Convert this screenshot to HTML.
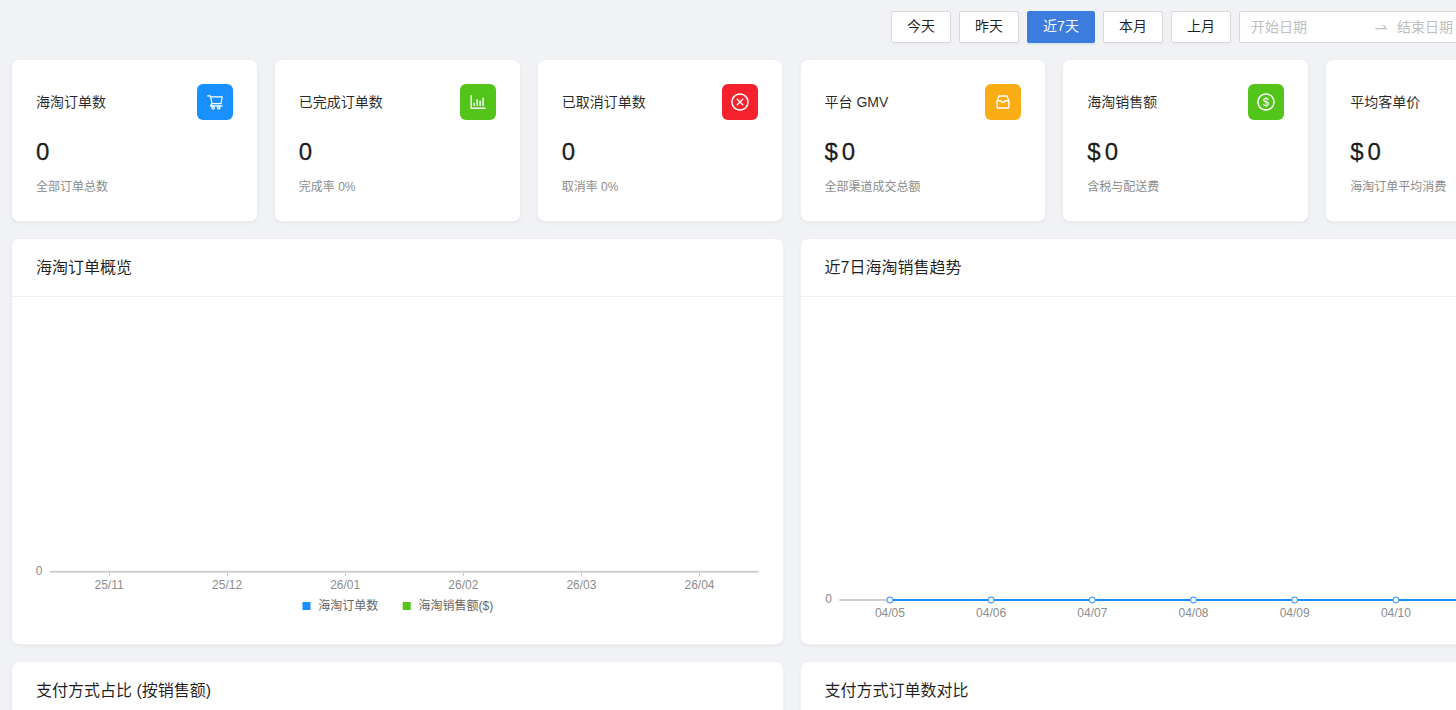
<!DOCTYPE html>
<html lang="zh-CN">
<head>
<meta charset="utf-8">
<title>海淘数据概览</title>
<style>
*{box-sizing:border-box;margin:0;padding:0}
html,body{width:1456px;height:710px;overflow:hidden;background:#f0f2f5}
body{font-family:"Liberation Sans","Noto Sans CJK SC",sans-serif;font-size:14px;color:rgba(0,0,0,.88);position:relative}
#wrap{position:absolute;left:0;top:0;width:1600px;height:900px}
.toolbar{position:absolute;top:11px;left:891px;height:32px;display:flex;gap:8px}
.btn{height:32px;border:1px solid #d9d9d9;background:#fff;border-radius:2px;font-size:14px;line-height:29px;text-align:center;width:60px;color:rgba(0,0,0,.88);box-shadow:0 2px 0 rgba(0,0,0,.02)}
.btn.primary{width:68px;background:#3c7cdc;border-color:#3c7cdc;color:#fff;box-shadow:0 2px 0 rgba(5,145,255,.1)}
.picker{width:300px;height:32px;border:1px solid #d9d9d9;background:#fff;border-radius:2px;display:flex;align-items:center;padding:0 11px 2px;color:#bfbfbf;font-size:14px}
.picker .ph{width:118px}
.picker .arrow{width:16px;margin:0 8px 0 4px;display:flex;align-items:center;position:relative;top:.7px}
.card{position:absolute;background:#fff;border:1px solid #f0f0f0;border-radius:8px;box-shadow:0 1px 2px 0 rgba(0,0,0,.03),0 1px 6px -1px rgba(0,0,0,.02),0 2px 4px 0 rgba(0,0,0,.02)}
.stat{top:59px;width:246.83px;height:163px;padding:24px}
.stat .hd{display:flex;justify-content:space-between;align-items:center;height:36px}
.stat .hd .t{font-size:14px;color:rgba(0,0,0,.85);position:relative;top:-1px}
.ico{width:36px;height:36px;border-radius:6px;display:flex;align-items:center;justify-content:center}
.ico svg{width:20px;height:20px;fill:#fff;display:block}
.stat .v{margin-top:16px;font-size:24px;line-height:32px;height:32px;color:rgba(0,0,0,.88);font-weight:500;-webkit-text-stroke:0.3px rgba(0,0,0,.88)}
.stat .v .pre{margin-right:4px}
.stat .c{margin-top:9px;font-size:12px;line-height:20px;color:#8c8c8c}
.chart{top:238px;width:772.5px;height:407.4px}
.chart .head{height:58px;border-bottom:1px solid #f0f0f0;padding:0 24px;font-size:16px;line-height:58px;color:rgba(0,0,0,.88)}
.bottom{top:661px;width:772.5px;height:200px}
.bottom .head{height:58px;border-bottom:1px solid #f0f0f0;padding:0 24px;font-size:16px;line-height:58px}
svg text{font-family:"Liberation Sans","Noto Sans CJK SC",sans-serif}
</style>
</head>
<body>
<div id="wrap">
<div class="toolbar">
  <div class="btn">今天</div>
  <div class="btn">昨天</div>
  <div class="btn primary">近7天</div>
  <div class="btn">本月</div>
  <div class="btn">上月</div>
  <div class="picker"><span class="ph">开始日期</span><span class="arrow"><svg width="16" height="16" viewBox="0 0 1024 1024" fill="#bfbfbf"><path d="M873.1 596.2l-164-208A32 32 0 00684 376h-64.800c-6.700 0-10.400 7.700-6.300 13l144.300 183H152c-4.400 0-8 3.600-8 8v60c0 4.400 3.600 8 8 8h695.900c26.800 0 41.700-30.800 25.200-51.800z"/></svg></span><span>结束日期</span></div>
</div>

<div class="card stat" style="left:11px">
  <div class="hd"><span class="t">海淘订单数</span><span class="ico" style="background:#1890ff"><svg style="width:18px;height:18px" viewBox="0 0 1024 1024"><path d="M922.9 701.9H327.4l29.9-60.900 496.800-.900c16.800 0 31.200-12 34.200-28.600l68.800-385.100c1.800-10.100-.9-20.500-7.500-28.400a34.990 34.990 0 00-26.600-12.500l-632-2.100-5.400-25.400c-3.400-16.200-18-28-34.600-28H96.500a35.300 35.300 0 100 70.600h125.900L246 312.800l58.100 281.300-74.800 122.100a34.960 34.960 0 00-3 36.800c6 11.900 18.100 19.400 31.500 19.400h62.800a102.430 102.430 0 00-20.600 61.700c0 56.600 46 102.600 102.600 102.600s102.600-46 102.600-102.600c0-22.300-7.400-44-20.600-61.700h161.100a102.430 102.430 0 00-20.600 61.700c0 56.600 46 102.600 102.600 102.600s102.600-46 102.600-102.600c0-22.300-7.400-44-20.600-61.700H923c19.400 0 35.300-15.800 35.300-35.300a35.420 35.420 0 00-35.400-35.200zM305.700 253l575.800 1.900-56.400 315.800-452.300.8L305.700 253zm96.900 612.700c-17.400 0-31.600-14.200-31.600-31.600 0-17.400 14.200-31.600 31.600-31.600s31.600 14.200 31.600 31.600a31.600 31.600 0 01-31.600 31.600zm325.100 0c-17.400 0-31.600-14.200-31.600-31.600 0-17.400 14.200-31.600 31.600-31.600s31.600 14.200 31.600 31.600a31.600 31.600 0 01-31.600 31.600z"/></svg></span></div>
  <div class="v">0</div><div class="c">全部订单总数</div>
</div>
<div class="card stat" style="left:273.83px">
  <div class="hd"><span class="t">已完成订单数</span><span class="ico" style="background:#52c41a"><svg viewBox="0 0 1024 1024"><path d="M888 792H200V168c0-4.400-3.600-8-8-8h-56c-4.400 0-8 3.600-8 8v688c0 4.400 3.600 8 8 8h752c4.400 0 8-3.600 8-8v-56c0-4.400-3.600-8-8-8zm-600-80h56c4.400 0 8-3.600 8-8V560c0-4.400-3.600-8-8-8h-56c-4.400 0-8 3.600-8 8v144c0 4.400 3.600 8 8 8zm152 0h56c4.400 0 8-3.600 8-8V384c0-4.400-3.600-8-8-8h-56c-4.400 0-8 3.600-8 8v320c0 4.400 3.600 8 8 8zm152 0h56c4.400 0 8-3.600 8-8V462c0-4.400-3.600-8-8-8h-56c-4.400 0-8 3.600-8 8v242c0 4.400 3.600 8 8 8zm152 0h56c4.400 0 8-3.600 8-8V304c0-4.400-3.600-8-8-8h-56c-4.400 0-8 3.600-8 8v400c0 4.400 3.600 8 8 8z"/></svg></span></div>
  <div class="v">0</div><div class="c">完成率 0%</div>
</div>
<div class="card stat" style="left:536.67px">
  <div class="hd"><span class="t">已取消订单数</span><span class="ico" style="background:#f5222d"><svg viewBox="0 0 1024 1024"><path d="M348 348L676 676M676 348L348 676" stroke="#fff" stroke-width="70" fill="none"/><path d="M512 65C264.600 65 64 265.600 64 513s200.600 448 448 448 448-200.600 448-448S759.400 65 512 65zm0 820c-205.400 0-372-166.600-372-372s166.600-372 372-372 372 166.600 372 372-166.600 372-372 372z"/></svg></span></div>
  <div class="v">0</div><div class="c">取消率 0%</div>
</div>
<div class="card stat" style="left:799.5px">
  <div class="hd"><span class="t">平台 GMV</span><span class="ico" style="background:#faad14"><svg style="width:18px;height:18px" viewBox="0 0 1024 1024"><path d="M885.200 446.300l-.2-.8-112.200-285.100c-5-16.100-19.900-27.200-36.800-27.200H281.200c-17 0-32.100 11.300-36.900 27.600L139.400 443l-.3.700-.2.800c-1.300 4.900-1.700 9.900-1 14.800-.1 1.600-.2 3.200-.2 4.800V830a60.900 60.900 0 0060.800 60.800h627.200c33.500 0 60.800-27.300 60.900-60.800V464.100c0-1.300 0-2.600-.1-3.700.4-4.900 0-9.600-1.300-14.100zm-295.800-43l-.3 15.700c-.8 44.900-31.800 75.100-77.100 75.100-22.100 0-41.100-7.100-54.800-20.600S436 441.200 435.600 419l-.3-15.700H229.500L309 210h399.200l81.700 193.300H589.400zm-375 76.800h157.300c24.300 57.100 76 90.800 140.400 90.800 33.700 0 65-9.400 90.300-27.200 22.200-15.600 39.500-37.400 50.700-63.600h156.500V814H214.400V480.100z"/></svg></span></div>
  <div class="v"><span class="pre">$</span>0</div><div class="c">全部渠道成交总额</div>
</div>
<div class="card stat" style="left:1062.33px">
  <div class="hd"><span class="t">海淘销售额</span><span class="ico" style="background:#52c41a"><svg viewBox="0 0 1024 1024"><path d="M512 64C264.600 64 64 264.600 64 512s200.600 448 448 448 448-200.600 448-448S759.400 64 512 64zm0 820c-205.400 0-372-166.600-372-372s166.600-372 372-372 372 166.600 372 372-166.600 372-372 372zm47.700-395.200l-25.400-5.900V348.600c38 5.200 61.500 29 65.500 58.200.5 4 3.900 6.900 7.900 6.900h44.900c4.700 0 8.400-4.100 8-8.800-6.100-62.300-57.400-102.300-125.900-109.200V263c0-4.400-3.600-8-8-8h-28.100c-4.400 0-8 3.600-8 8v33c-70.800 6.900-126.200 46-126.200 119 0 67.600 49.800 100.200 102.100 112.700l24.700 6.300v142.700c-44.200-5.900-69-29.500-74.100-61.300-.6-3.800-4-6.600-7.900-6.600H363c-4.700 0-8.400 4-8 8.700 4.500 55 46.200 105.600 135.200 112.100V761c0 4.400 3.600 8 8 8h28.400c4.400 0 8-3.600 8-8.100l-.2-31.700c78.300-6.900 134.300-48.800 134.300-124-.1-69.400-44.200-100.400-109-116.400zm-68.600-16.200c-5.600-1.600-10.300-3.100-15-5-33.800-12.200-49.500-31.900-49.500-57.300 0-36.300 27.500-57 64.500-61.700v124zM534.300 677V543.300c3.100.9 5.900 1.600 8.800 2.200 47.300 14.400 63.200 34.400 63.200 65.100 0 39.100-29.400 62.600-72 66.400z"/></svg></span></div>
  <div class="v"><span class="pre">$</span>0</div><div class="c">含税与配送费</div>
</div>
<div class="card stat" style="left:1325.17px">
  <div class="hd"><span class="t">平均客单价</span><span class="ico" style="background:#1890ff"><svg style="width:18px;height:18px" viewBox="0 0 1024 1024"><path d="M922.9 701.9H327.4l29.9-60.900 496.800-.900c16.800 0 31.200-12 34.200-28.600l68.800-385.100c1.800-10.100-.9-20.500-7.500-28.400a34.990 34.990 0 00-26.600-12.500l-632-2.100-5.400-25.400c-3.400-16.200-18-28-34.600-28H96.500a35.300 35.300 0 100 70.600h125.900L246 312.800l58.100 281.300-74.800 122.100a34.960 34.960 0 00-3 36.800c6 11.900 18.100 19.400 31.500 19.400h62.800a102.430 102.430 0 00-20.600 61.700c0 56.600 46 102.600 102.600 102.600s102.600-46 102.600-102.600c0-22.300-7.400-44-20.600-61.700h161.100a102.430 102.430 0 00-20.600 61.700c0 56.600 46 102.600 102.600 102.600s102.600-46 102.600-102.600c0-22.300-7.400-44-20.600-61.700H923c19.400 0 35.300-15.800 35.300-35.300a35.420 35.420 0 00-35.400-35.200zM305.700 253l575.800 1.900-56.400 315.800-452.300.8L305.700 253zm96.900 612.700c-17.400 0-31.600-14.200-31.600-31.600 0-17.400 14.200-31.600 31.600-31.600s31.600 14.200 31.600 31.600a31.600 31.600 0 01-31.600 31.600zm325.100 0c-17.400 0-31.600-14.200-31.600-31.600 0-17.400 14.200-31.600 31.600-31.600s31.600 14.200 31.600 31.600a31.600 31.600 0 01-31.600 31.600z"/></svg></span></div>
  <div class="v"><span class="pre">$</span>0</div><div class="c">海淘订单平均消费</div>
</div>

<div class="card chart" style="left:11px">
  <div class="head">海淘订单概览</div>
<svg width="772" height="406" style="position:absolute;left:-1px;top:-1px" viewBox="11 238 772 406">
<g font-size="12" fill="#8c8c8c" text-anchor="middle">
<text x="39" y="575.2">0</text>
<path d="M50 571.8H758.5" stroke="#cfcfcf" stroke-width="2" fill="none"/>
<path d="M109.500 572.800v3M227.500 572.800v3M345.500 572.800v3M463.500 572.800v3M581.500 572.800v3M699.500 572.800v3" stroke="#c8c8c8" stroke-width="1" fill="none"/>
<text x="109.040" y="589">25/11</text><text x="227.100" y="589">25/12</text><text x="345.200" y="589">26/01</text><text x="463.300" y="589">26/02</text><text x="581.400" y="589">26/03</text><text x="699.500" y="589">26/04</text>
</g>
<rect x="302.500" y="602" width="8" height="8" fill="#1890ff"/>
<text x="318.300" y="610.300" font-size="12" fill="#666">海淘订单数</text>
<rect x="402.700" y="602" width="8" height="8" fill="#52c41a"/>
<text x="418.500" y="610.300" font-size="12" fill="#666">海淘销售额($)</text>
</svg>
</div>
<div class="card chart" style="left:799.5px">
  <div class="head">近7日海淘销售趋势</div>
<svg width="772" height="406" style="position:absolute;left:-1px;top:-1px" viewBox="799.500 238 772 406">
<g font-size="12" fill="#8c8c8c" text-anchor="middle">
<text x="828.100" y="603">0</text>
<path d="M838.800 600H1547.300" stroke="#cfcfcf" stroke-width="2" fill="none"/>
<path d="M889.400 600H1496.600" stroke="#1890ff" stroke-width="2" fill="none"/>
<g fill="#fff" stroke="#4da3ff" stroke-width="1.100"><circle cx="889.4" cy="600" r="2.900"/><circle cx="990.6" cy="600" r="2.900"/><circle cx="1091.8" cy="600" r="2.900"/><circle cx="1193.0" cy="600" r="2.900"/><circle cx="1294.2" cy="600" r="2.900"/><circle cx="1395.4" cy="600" r="2.900"/><circle cx="1496.6" cy="600" r="2.900"/></g>
<text x="889.4" y="617">04/05</text><text x="990.6" y="617">04/06</text><text x="1091.8" y="617">04/07</text><text x="1193.0" y="617">04/08</text><text x="1294.2" y="617">04/09</text><text x="1395.4" y="617">04/10</text><text x="1496.6" y="617">04/11</text>
</g>
</svg>
</div>

<div class="card bottom" style="left:11px"><div class="head">支付方式占比 (按销售额)</div></div>
<div class="card bottom" style="left:799.5px"><div class="head">支付方式订单数对比</div></div>
</div>
</body>
</html>
